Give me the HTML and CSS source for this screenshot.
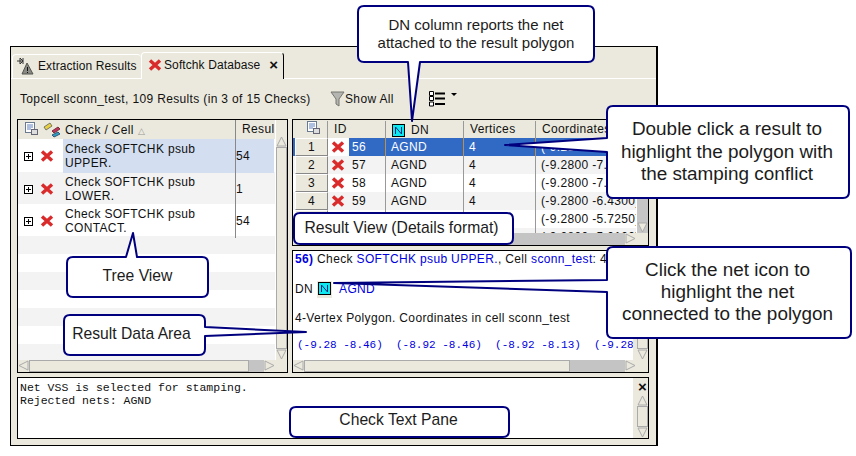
FILE: index.html
```html
<!DOCTYPE html>
<html>

<head>
    <title>Softchk Database</title>
    <meta charset="utf-8">
    <link rel="stylesheet" href="styles.css">
</head>

<body>
    <svg class="defs" width="0" height="0">
        <symbol id="redx" viewBox="0 0 14 14">
            <path d="M2 2.5 L12 11.5 M12 2.5 L2 11.5" stroke="#d92b2b" stroke-width="3.4" fill="none" />
        </symbol>
        <symbol id="plus" viewBox="0 0 9 9">
            <rect x="0.5" y="0.5" width="8" height="8" fill="#fff" stroke="#000" />
            <path d="M2 4.5 H7 M4.5 2 V7" stroke="#000" fill="none" />
        </symbol>
        <symbol id="cols" viewBox="0 0 14 14">
            <rect x="0.5" y="0.5" width="9" height="10" fill="#fff" stroke="#6a7a90" />
            <path d="M2 3 H8 M2 5 H8 M2 7 H6" stroke="#6080c0" fill="none" />
            <rect x="6.5" y="7.5" width="6" height="5" fill="#ddd" stroke="#667" />
        </symbol>
        <symbol id="neticon" viewBox="0 0 13 13">
            <rect x="0.5" y="0.5" width="12" height="12" fill="#10e8f0" stroke="#000" />
            <path d="M3.5 10 V3 L9.5 10 V3" stroke="#0a2a80" fill="none" />
        </symbol>
        <symbol id="up" viewBox="0 0 11 11">
            <path d="M5.5 1 L10 10 H1 Z" fill="#ebe9dd" stroke="#aaa" />
        </symbol>
        <symbol id="down" viewBox="0 0 11 11">
            <path d="M5.5 10 L10 1 H1 Z" fill="#ebe9dd" stroke="#aaa" />
        </symbol>
        <symbol id="left" viewBox="0 0 11 11">
            <path d="M1 5.5 L10 1 V10 Z" fill="#ebe9dd" stroke="#aaa" />
        </symbol>
        <symbol id="right" viewBox="0 0 11 11">
            <path d="M10 5.5 L1 1 V10 Z" fill="#ebe9dd" stroke="#aaa" />
        </symbol>
    </svg>

    <div id="window">
        <div class="tabs">
            <div class="tab">
                <svg class="tab-icon" width="18" height="18" viewBox="0 0 18 18">
                    <path d="M1 4 H7 M4 1 L7 4 L4 7 V1 M7 1 V7" stroke="#333" fill="none" />
                    <path d="M11 6 L17 17 H6 Z" fill="#8a8a84" stroke="#55554f" />
                    <path d="M11.5 10 V14 M11.5 15 V16" stroke="#111" fill="none" />
                </svg>
                <span class="tab-label">Extraction Results</span>
            </div>
            <div class="tab active">
                <svg class="xicon" width="14" height="14"><use href="#redx" /></svg>
                <span class="tab-label">Softchk Database</span>
                <span class="tab-close">×</span>
            </div>
        </div>

        <div class="infobar">
            <span class="summary">Topcell sconn_test, 109 Results (in 3 of 15 Checks)</span>
            <span class="showall">
                <svg width="15" height="16" viewBox="0 0 15 16">
                    <path d="M1 1 H14 L9 8 V15 L6 13 V8 Z" fill="#b4b4b0" stroke="#77776f" />
                </svg>
                Show All
            </span>
            <svg class="listicon" width="30" height="17" viewBox="0 0 30 17">
                <path d="M0.5 1.5 H4.5 V5.5 H0.5 Z M0.5 6.5 H4.5 V10.5 H0.5 Z M0.5 12 H4.5 V16 H0.5 Z" fill="#fff" stroke="#000" />
                <path d="M6 3.5 H16 M6 8.5 H16 M6 14 H16" stroke="#000" stroke-width="2" fill="none" />
                <path d="M22 3 H28 L25 6 Z" fill="#000" />
            </svg>
        </div>

        <div class="workarea">
            <div class="pane tree-pane">
                <div class="pane-main">
                    <div class="list">
                        <div class="tree-head">
                            <span class="tree-head-icons">
                                <svg width="14" height="14"><use href="#cols" /></svg>
                                <svg width="18" height="16" viewBox="0 0 18 16">
                                    <path d="M1 5 L7 1 L9 4 L3 8 Z" fill="#e8d040" stroke="#776" />
                                    <path d="M9 9 L15 5 L17 7 L11 11 Z" fill="#c03060" stroke="#733" />
                                    <path d="M9 13 L15 10 L17 12 L11 15 Z" fill="#30a0c0" stroke="#357" />
                                </svg>
                            </span>
                            <span class="tree-head-name">Check / Cell <i class="sort">△</i></span>
                            <span class="tree-head-res">Resul</span>
                        </div>
                        <div class="tree-row selected">
                            <span class="tree-icons"><svg width="9" height="9"><use href="#plus" /></svg><svg width="14" height="14"><use href="#redx" /></svg></span>
                            <span class="tree-name">Check SOFTCHK psub UPPER.</span>
                            <span class="tree-res">54</span>
                        </div>
                        <div class="tree-row">
                            <span class="tree-icons"><svg width="9" height="9"><use href="#plus" /></svg><svg width="14" height="14"><use href="#redx" /></svg></span>
                            <span class="tree-name">Check SOFTCHK psub LOWER.</span>
                            <span class="tree-res">1</span>
                        </div>
                        <div class="tree-row">
                            <span class="tree-icons"><svg width="9" height="9"><use href="#plus" /></svg><svg width="14" height="14"><use href="#redx" /></svg></span>
                            <span class="tree-name">Check SOFTCHK psub CONTACT.</span>
                            <span class="tree-res">54</span>
                        </div>
                        <div class="stripe"></div>
                        <div class="stripe"></div>
                        <div class="stripe"></div>
                        <div class="stripe"></div>
                        <div class="stripe"></div>
                        <div class="stripe"></div>
                        <div class="stripe"></div>
                    </div>
                    <div class="vscroll head-gap">
                        <svg width="11" height="11"><use href="#up" /></svg>
                        <div class="vthumb"></div>
                        <svg width="11" height="11"><use href="#down" /></svg>
                    </div>
                </div>
                <div class="hscroll">
                    <svg width="11" height="11"><use href="#left" /></svg>
                    <div class="hthumb thumb-wide"></div>
                    <div class="htrack"></div>
                    <svg width="11" height="11"><use href="#right" /></svg>
                    <div class="corner"></div>
                </div>
            </div>

            <div class="right-col">
                <div class="pane result-pane">
                    <div class="pane-main">
                        <div class="grid">
                            <div class="grid-head">
                                <span class="rownum"><svg width="14" height="14"><use href="#cols" /></svg></span>
                                <span class="c-id">ID</span>
                                <span class="c-dn"><svg width="13" height="13"><use href="#neticon" /></svg> DN</span>
                                <span class="c-v">Vertices</span>
                                <span class="c-co">Coordinates</span>
                            </div>
                            <div class="grid-row selected">
                                <span class="rownum">1</span>
                                <span class="c-id"><svg width="14" height="14"><use href="#redx" /></svg><b>56</b></span>
                                <span class="c-dn">AGND</span>
                                <span class="c-v">4</span>
                                <span class="c-co">(-9.2800 -7.85)</span>
                            </div>
                            <div class="grid-row">
                                <span class="rownum">2</span>
                                <span class="c-id"><svg width="14" height="14"><use href="#redx" /></svg><b>57</b></span>
                                <span class="c-dn">AGND</span>
                                <span class="c-v">4</span>
                                <span class="c-co">(-9.2800 -7.50)</span>
                            </div>
                            <div class="grid-row">
                                <span class="rownum">3</span>
                                <span class="c-id"><svg width="14" height="14"><use href="#redx" /></svg><b>58</b></span>
                                <span class="c-dn">AGND</span>
                                <span class="c-v">4</span>
                                <span class="c-co">(-9.2800 -7.15)</span>
                            </div>
                            <div class="grid-row">
                                <span class="rownum">4</span>
                                <span class="c-id"><svg width="14" height="14"><use href="#redx" /></svg><b>59</b></span>
                                <span class="c-dn">AGND</span>
                                <span class="c-v">4</span>
                                <span class="c-co">(-9.2800 -6.4300)</span>
                            </div>
                            <div class="grid-row">
                                <span class="rownum"></span>
                                <span class="c-id"></span>
                                <span class="c-dn"></span>
                                <span class="c-v"></span>
                                <span class="c-co">(-9.2800 -5.7250)</span>
                            </div>
                            <div class="grid-row">
                                <span class="rownum"></span>
                                <span class="c-id"></span>
                                <span class="c-dn"></span>
                                <span class="c-v"></span>
                                <span class="c-co">(-9.2800 -5.0100)</span>
                            </div>
                        </div>
                        <div class="vscroll grey head-gap">
                            <svg width="11" height="11"><use href="#up" /></svg>
                            <div class="vthumb short"></div>
                            <svg width="11" height="11"><use href="#down" /></svg>
                        </div>
                    </div>
                    <div class="hscroll">
                        <svg width="11" height="11"><use href="#left" /></svg>
                        <div class="hthumb thumb-small"></div>
                        <div class="htrack"></div>
                        <svg width="11" height="11"><use href="#right" /></svg>
                        <div class="corner"></div>
                    </div>
                </div>

                <div class="pane detail-pane">
                    <div class="pane-main">
                        <div class="detail">
                            <p class="d-title"><b class="blue">56)</b> Check <span class="blue">SOFTCHK psub UPPER.</span>, Cell <span class="blue">sconn_test</span>: 4-</p>
                            <p class="d-net">DN <span class="netbtn"><svg width="13" height="13"><use href="#neticon" /></svg></span> <span class="blue">AGND</span></p>
                            <p class="d-poly">4-Vertex Polygon. Coordinates in cell sconn_test</p>
                            <p class="d-coords">(-9.28 -8.46)  (-8.92 -8.46)  (-8.92 -8.13)  (-9.28</p>
                        </div>
                        <div class="vscroll wide">
                            <svg width="11" height="11"><use href="#up" /></svg>
                            <div class="vthumb"></div>
                            <svg width="11" height="11"><use href="#down" /></svg>
                        </div>
                    </div>
                    <div class="hscroll">
                        <svg width="11" height="11"><use href="#left" /></svg>
                        <div class="hthumb thumb-detail"></div>
                        <div class="htrack"></div>
                        <svg width="11" height="11"><use href="#right" /></svg>
                        <div class="corner"></div>
                    </div>
                </div>
            </div>
        </div>

        <div class="pane check-pane">
            <pre class="check-text">Net VSS is selected for stamping.
Rejected nets: AGND</pre>
            <div class="vscroll wide">
                <span class="pane-close">×</span>
                <svg width="11" height="11"><use href="#up" /></svg>
                <div class="vthumb"></div>
                <svg width="11" height="11"><use href="#down" /></svg>
            </div>
        </div>
    </div>

    <!-- callouts on top of the screenshot -->
    <svg class="callouts" width="856" height="456" viewBox="0 0 856 456">
        <path d="M364 6 H588 Q594 6 594 12 V56 Q594 62 588 62 H420 L412 121 L408 62 H364 Q358 62 358 56 V12 Q358 6 364 6 Z" />
        <path d="M505 145 L607 138 V112 Q607 106 613 106 H843 Q849 106 849 112 V192 Q849 198 843 198 H613 Q607 198 607 192 V152 Z" />
        <path d="M300 213 H507 Q513 213 513 219 V238 Q513 244 507 244 H300 Q294 244 294 238 V219 Q294 213 300 213 Z" />
        <path d="M334 283 L607 280 V253 Q607 247 613 247 H845 Q851 247 851 253 V332 Q851 338 845 338 H613 Q607 338 607 332 V292 Z" />
        <path d="M133 233 L137 257 H202 Q208 257 208 263 V291 Q208 297 202 297 H73 Q67 297 67 291 V263 Q67 257 73 257 H126 Z" />
        <path d="M306 332 L205 327 V321 Q205 315 199 315 H70 Q64 315 64 321 V349 Q64 355 70 355 H199 Q205 355 205 349 V336 Z" />
        <path d="M296 407 H503 Q509 407 509 413 V431 Q509 437 503 437 H296 Q290 437 290 431 V413 Q290 407 296 407 Z" />
    </svg>
    <div class="note note-dn">DN column reports the net<br>attached to the result polygon</div>
    <div class="note note-dbl">Double click a result to<br>highlight the polygon with<br>the stamping conflict</div>
    <div class="note note-rv">Result View (Details format)</div>
    <div class="note note-net">Click the net icon to<br>highlight the net<br>connected to the polygon</div>
    <div class="note note-tree">Tree View</div>
    <div class="note note-data">Result Data Area</div>
    <div class="note note-text">Check Text Pane</div>
</body>

</html>
```

FILE: styles.css
```css
html,
body {
    margin: 0;
    padding: 0;
    background: white;
}

body {
    width: 856px;
    height: 456px;
    overflow: hidden;
    font-family: "Liberation Sans", Arial, sans-serif;
    font-size: 12px;
    letter-spacing: 0.35px;
    color: #111;
    padding-top: 46px;
    padding-left: 10px;
    box-sizing: border-box;
}

.defs {
    display: block;
    height: 0;
}

svg {
    flex: none;
}

#window {
    width: 648px;
    height: 400px;
    box-sizing: border-box;
    background: #ebe9dd;
    border: 1px solid black;
    border-right-width: 2px;
}

/* tabs */
.tabs {
    height: 32px;
    box-sizing: border-box;
    padding: 5px 0 0 1px;
    border-bottom: 1px solid white;
    display: flex;
    align-items: flex-end;
}

.tab {
    height: 24px;
    width: 129px;
    flex: none;
    box-sizing: border-box;
    display: flex;
    align-items: center;
    gap: 4px;
    padding: 0 0 1px 3px;
    border-top: 1px solid white;
    border-left: 1px solid white;
    border-radius: 4px 4px 0 0;
    white-space: nowrap;
}

.tab-label {
    letter-spacing: 0.1px;
}

.tab.active {
    height: 27px;
    width: 143px;
    padding: 0 0 3px 6px;
    gap: 2px;
    border-right: 1px solid black;
    margin-bottom: -1px;
    background: #ebe9dd;
}

.tab-close {
    margin-left: 7px;
    font-weight: bold;
    font-size: 15px;
}

.infobar {
    height: 40px;
    display: flex;
    align-items: center;
    padding-left: 9px;
}

.summary {
    width: 310px;
    white-space: nowrap;
}

.showall {
    display: flex;
    align-items: center;
    width: 99px;
}

.listicon {
    margin-top: -2px;
}

/* panes */
.workarea {
    display: flex;
    gap: 4px;
    padding-left: 6px;
    height: 254px;
}

.pane {
    box-sizing: border-box;
    border: 1px solid black;
    background: white;
    display: flex;
    flex-direction: column;
}

.pane-main {
    flex: 1;
    min-height: 0;
    display: flex;
}

.tree-pane {
    width: 271px;
}

.right-col {
    width: 357px;
    display: flex;
    flex-direction: column;
    gap: 4px;
}

.result-pane {
    height: 127px;
}

.detail-pane {
    height: 123px;
}

.check-pane {
    margin: 4px 0 0 6px;
    width: 632px;
    height: 62px;
    flex-direction: row;
}

/* scrollbars */
.vscroll {
    width: 11px;
    flex: none;
    background: #ebe9dd;
    display: flex;
    flex-direction: column;
    box-sizing: border-box;
    margin-left: 1px;
}

.vscroll.wide {
    width: 15px;
    padding-left: 4px;
    margin-left: 0;
}

.vscroll svg,
.hscroll svg {
    display: block;
}

.head-gap {
    padding-top: 16px;
}

.vscroll.grey {
    background: #c6c6c6;
}

.vthumb {
    flex: 1;
    background: #ebe9dd;
    border: 1px solid #aaa;
    box-sizing: border-box;
}

.vthumb.short {
    flex: none;
    height: 20px;
    margin-bottom: auto;
}

.hscroll {
    height: 12px;
    flex: none;
    display: flex;
    background: #ebe9dd;
}

.hthumb {
    background: #ebe9dd;
    border: 1px solid #aaa;
    box-sizing: border-box;
}

.htrack {
    flex: 1;
    background: #c4c4c4;
}

.corner {
    width: 12px;
}

.thumb-wide {
    width: 220px;
}

.thumb-small {
    width: 40px;
}

.thumb-detail {
    width: 266px;
}

/* tree list */
.list {
    flex: 1;
    min-width: 0;
    background: white;
    overflow: hidden;
}

.tree-head {
    height: 19px;
    background: #ebe9dd;
    display: grid;
    grid-template-columns: 45px 172px 39px;
    align-items: center;
    overflow: hidden;
}

.tree-head-icons {
    display: flex;
    gap: 4px;
    padding-left: 7px;
}

.tree-head-name {
    padding-left: 2px;
}

.sort {
    font-style: normal;
    font-size: 9px;
    color: #999;
}

.tree-head-res {
    padding-left: 6px;
    height: 19px;
    line-height: 19px;
    border-left: 1px solid #888;
    white-space: nowrap;
}

.tree-row {
    display: grid;
    grid-template-columns: 45px 172px 39px;
    height: 32px;
    line-height: 14px;
}

.tree-row:nth-child(3) {
    background: #f3f3f3;
}

.tree-icons {
    display: flex;
    align-items: center;
    gap: 7px;
    padding-left: 6px;
}

.tree-name {
    padding: 3px 30px 0 2px;
}

.selected .tree-name,
.selected .tree-res {
    background: #d3dff0;
}

.tree-row.selected {
    height: 33px;
}

.tree-res {
    border-left: 1px solid #888;
    line-height: 34px;
}

.stripe {
    height: 18px;
}

.stripe:nth-child(odd) {
    background: #f3f3f3;
}

/* result grid */
.grid {
    flex: 1;
    min-width: 0;
    overflow: hidden;
    background: white;
}

.grid-head,
.grid-row {
    display: grid;
    grid-template-columns: 35px 58px 78px 72px 120px;
    white-space: nowrap;
}

.grid-head {
    height: 17px;
    line-height: 17px;
    background: #ebe9dd;
    border-top: 1px solid #ebe9dd;
}

.grid-head span {
    padding-left: 6px;
    border-right: 1px solid #999;
}

.grid-head .c-dn {
    display: flex;
    align-items: center;
    gap: 6px;
}

.grid-row {
    height: 18px;
    line-height: 18px;
}

.grid-row:nth-child(even) {
    background: white;
}

.grid-row:nth-child(odd) {
    background: #f3f3f3;
}

.grid-row span {
    padding-left: 5px;
    border-right: 1px solid #999;
}

.rownum {
    margin-left: 2px;
    background: #ebe9dd;
    text-align: center;
    box-sizing: border-box;
}

.grid-row .rownum {
    padding: 0;
    border: 1px solid;
    border-color: white #888 #888 white;
    line-height: 16px;
    color: #111;
}

.grid-row .c-id {
    display: flex;
    align-items: center;
    padding-left: 0;
    background: white;
}

.grid-row:nth-child(odd) .c-id {
    background: #f3f3f3;
}

.grid-row .c-id svg {
    margin: 0 4px 0 3px;
}

.grid-row .c-id b {
    font-weight: normal;
    padding-left: 3px;
    flex: 1;
}

.grid-row.selected {
    background: #316ac5;
    color: white;
}

.grid-row.selected .c-id {
    background: white;
}

.grid-row.selected .c-id b {
    background: #316ac5;
}

.grid-row.selected span:not(.rownum) {
    border-color: #c09040;
}

/* details */
.detail {
    flex: 1;
    min-width: 0;
    overflow: hidden;
    white-space: nowrap;
    padding: 0 0 0 2px;
}

.detail p {
    margin: 0;
}

.blue {
    color: #0000e0;
}

.d-title {
    height: 30px;
    line-height: 16px;
}

.d-net {
    height: 29px;
    line-height: 17px;
    display: flex;
    align-items: flex-start;
    gap: 4px;
}

.netbtn {
    display: inline-block;
    background: #ebe9dd;
    padding: 1px;
    height: 15px;
    margin-right: 3px;
}

.d-poly {
    height: 29px;
    line-height: 16px;
}

.d-coords {
    font-family: "Liberation Mono", monospace;
    font-size: 11px;
    letter-spacing: 0;
    color: #0000e0;
    white-space: pre;
    padding-left: 2px;
}

/* check text */
.check-text {
    flex: 1;
    margin: 0;
    padding: 3px 2px;
    font-family: "Liberation Mono", monospace;
    font-size: 11.5px;
    line-height: 13px;
    letter-spacing: 0;
}

.pane-close {
    height: 17px;
    text-align: center;
    font-weight: bold;
    font-size: 15px;
    line-height: 17px;
    letter-spacing: 0;
}

/* callouts */
.callouts {
    position: absolute;
    left: 0;
    top: 0;
}

.callouts path {
    fill: white;
    stroke: #00007f;
    stroke-width: 2;
    stroke-linejoin: round;
}

.note {
    position: absolute;
    color: #1c1c1c;
    font-size: 15.7px;
    letter-spacing: 0;
    text-align: center;
    white-space: nowrap;
}

.note-dn {
    left: 358px;
    width: 236px;
    top: 16px;
    font-size: 15px;
    line-height: 18px;
}

.note-dbl {
    left: 606px;
    width: 242px;
    top: 118px;
    font-size: 18.9px;
    line-height: 22.5px;
}

.note-rv {
    left: 292px;
    width: 219px;
    top: 219px;
}

.note-net {
    left: 606px;
    width: 243px;
    top: 259px;
    font-size: 18.9px;
    line-height: 22px;
}

.note-tree {
    left: 67px;
    width: 141px;
    top: 267px;
}

.note-data {
    left: 64px;
    width: 135px;
    top: 325px;
}

.note-text {
    left: 289px;
    width: 219px;
    top: 411px;
}
```
